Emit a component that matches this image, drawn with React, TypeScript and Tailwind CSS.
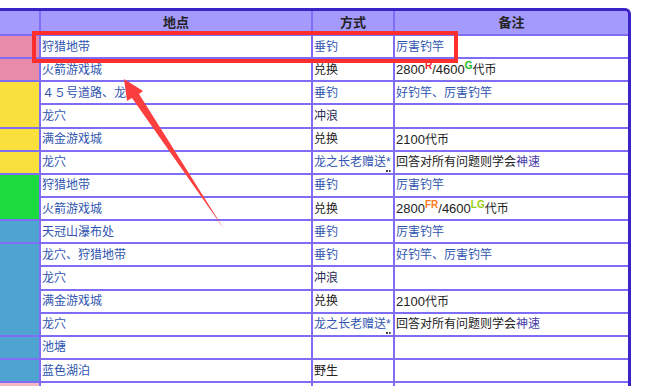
import type { ReactNode } from 'react';

const LINK = 'text-[#2f55b0]';
const DARK = 'text-[#222]';

type Row = {
  band?: { color: string; span: number };
  place?: ReactNode;
  method?: ReactNode;
  note?: ReactNode;
};

const link = (t: string) => <span className={LINK}>{t}</span>;
const dark = (t: string) => <span className={DARK}>{t}</span>;

const elderGift = (
  <span className={LINK}>
    龙之长老赠送
    <span className="border-b-[2px] border-dotted border-[#444] pb-[1px]">*</span>
  </span>
);

const quizNote = (
  <span className={DARK}>
    回答对所有问题则学会<span className="text-[#463aa8]">神速</span>
  </span>
);

const coins = (a: string, aColor: string, b: string, bColor: string) => (
  <span className={`${DARK} text-[13px]`}>
    2800<sup className={`text-[10px] font-bold ${aColor}`}>{a}</sup>/4600
    <sup className={`text-[10px] font-bold ${bColor}`}>{b}</sup>
    <span className="text-[12px]">代币</span>
  </span>
);

const coinsPlain = (
  <span className={DARK}>
    <span className="text-[13px]">2100</span>代币
  </span>
);

const rows: Row[] = [
  { band: { color: 'bg-[#e88aaa]', span: 1 }, place: link('狩猎地带'), method: link('垂钓'), note: link('厉害钓竿') },
  { band: { color: 'bg-[#e88aaa]', span: 1 }, place: link('火箭游戏城'), method: dark('兑换'), note: coins('R', 'text-[#ff2020]', 'G', 'text-[#22bb22]') },
  { band: { color: 'bg-[#f9e03d]', span: 2 }, place: link('４５号道路、龙穴'), method: link('垂钓'), note: link('好钓竿、厉害钓竿') },
  { place: link('龙穴'), method: <span className="text-[#2b2b55]">冲浪</span> },
  { band: { color: 'bg-[#f9e03d]', span: 1 }, place: link('满金游戏城'), method: dark('兑换'), note: coinsPlain },
  { band: { color: 'bg-[#f9e03d]', span: 1 }, place: link('龙穴'), method: elderGift, note: quizNote },
  { band: { color: 'bg-[#1cdb3e]', span: 2 }, place: link('狩猎地带'), method: link('垂钓'), note: link('厉害钓竿') },
  { place: link('火箭游戏城'), method: dark('兑换'), note: coins('FR', 'text-[#ff7a22]', 'LG', 'text-[#99cc11]') },
  { band: { color: 'bg-[#4fa3d1]', span: 1 }, place: link('天冠山瀑布处'), method: link('垂钓'), note: link('厉害钓竿') },
  { band: { color: 'bg-[#4fa3d1]', span: 4 }, place: link('龙穴、狩猎地带'), method: link('垂钓'), note: link('好钓竿、厉害钓竿') },
  { place: link('龙穴'), method: <span className="text-[#2b2b55]">冲浪</span> },
  { place: link('满金游戏城'), method: dark('兑换'), note: coinsPlain },
  { place: link('龙穴'), method: elderGift, note: quizNote },
  { band: { color: 'bg-[#4fa3d1]', span: 1 }, place: link('池塘') },
  { band: { color: 'bg-[#4fa3d1]', span: 1 }, place: link('蓝色湖泊'), method: dark('野生') },
  { band: { color: 'bg-[#f2b9c2]', span: 1 } },
];

const spanCls: Record<number, string> = {
  1: 'row-span-1',
  2: 'row-span-2',
  4: 'row-span-4',
};

function Cell({ children }: { children?: ReactNode }) {
  return (
    <div className="flex items-center overflow-hidden whitespace-nowrap bg-white pl-[1px] text-[12px] leading-none">
      {children}
    </div>
  );
}

export default function App() {
  return (
    <div className="relative h-[386px] w-[666px] overflow-hidden bg-white font-['Liberation_Sans','Noto_Sans_CJK_SC',sans-serif]">
      {/* TABLE */}
      <div className="mt-[8px] grid w-[631px] grid-cols-[39px_270px_80px_233px] grid-rows-[23px_repeat(16,21.15px)] gap-[2px] rounded-tr-[6px] border-t-[3px] border-r-[3px] border-[#3a24c8] bg-[#7f6ef5]">
        <div className="bg-[#a499fc]" />
        <div className="flex items-center justify-center bg-[#a499fc] text-[13px] font-bold text-[#222]">地点</div>
        <div className="flex items-center justify-center bg-[#a499fc] text-[13px] font-bold text-[#222]">方式</div>
        <div className="flex items-center justify-center rounded-tr-[3px] bg-[#a499fc] text-[13px] font-bold text-[#222]">备注</div>

        {rows.map((r, i) => (
          <div key={i} className="contents">
            {r.band && <div className={`${r.band.color} ${spanCls[r.band.span]}`} />}
            <Cell>{r.place}</Cell>
            <Cell>{r.method}</Cell>
            <Cell>{r.note}</Cell>
          </div>
        ))}
      </div>

      {/* RED ANNOTATION */}
      <div className="absolute left-[32px] top-[31px] h-[32px] w-[426px] border-[4px] border-[#ff2e2e]" />
      <svg className="absolute left-0 top-0" width="666" height="386" viewBox="0 0 666 386">
        <polygon points="124,79 143,91 139,94 224,229 132,98 127,101" fill="#fb3f3f" />
      </svg>
    </div>
  );
}
